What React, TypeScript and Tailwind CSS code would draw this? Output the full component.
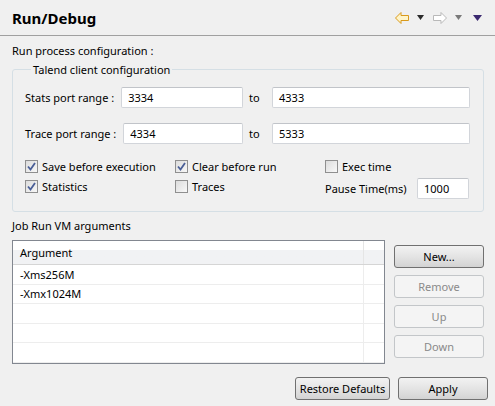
import React from 'react';

const font = 'font-["Noto_Sans","Open_Sans",sans-serif]';

function BackArrow() {
  return (
    <svg width="14" height="12" viewBox="0 0 14 12">
      <path
        d="M0.5 6 L6 0.5 L6 3.5 L13.5 3.5 L13.5 8.5 L6 8.5 L6 11.5 Z"
        fill="#fff4c8"
        stroke="#d99a1c"
        strokeWidth="1"
        strokeLinejoin="round"
      />
    </svg>
  );
}

function ForwardArrow() {
  return (
    <svg width="14" height="12" viewBox="0 0 14 12">
      <path
        d="M13.5 6 L8 0.5 L8 3.5 L0.5 3.5 L0.5 8.5 L8 8.5 L8 11.5 Z"
        fill="#ffffff"
        stroke="#b9b9b9"
        strokeWidth="1"
        strokeLinejoin="round"
      />
    </svg>
  );
}

function Tri({ color, w = 7 }: { color: string; w?: number }) {
  const h = Math.ceil(w / 2) + 1;
  return (
    <svg width={w} height={h} viewBox={`0 0 ${w} ${h}`}>
      <path d={`M0 0 L${w} 0 L${w / 2} ${h} Z`} fill={color} />
    </svg>
  );
}

function Check({ checked, label }: { checked?: boolean; label: string }) {
  return (
    <label className="flex items-center gap-[4px] h-[20px] whitespace-nowrap">
      <span className="w-[13px] h-[13px] border border-[#8f8f8f] bg-white flex items-center justify-center">
        <span className="w-[11px] h-[11px] bg-gradient-to-br from-[#dcdcdc] to-[#f8f8f8] flex items-center justify-center">
          {checked && (
            <svg width="9" height="9" viewBox="0 0 9 9">
              <path d="M1 4.5 L3.5 7.5 L8 1" fill="none" stroke="#4a5f97" strokeWidth="1.8" />
            </svg>
          )}
        </span>
      </span>
      <span>{label}</span>
    </label>
  );
}

function Field({ value, className = '' }: { value: string; className?: string }) {
  return (
    <div
      className={`h-[21px] bg-white border border-[#d2d5da] border-t-[#c1c4c9] rounded-[2px] flex items-center px-[6px] ${className}`}
    >
      {value}
    </div>
  );
}

function Btn({ label, disabled, className = '' }: { label: string; disabled?: boolean; className?: string }) {
  return (
    <button
      className={`h-[23px] rounded-[3px] border flex items-center justify-center whitespace-nowrap ${
        disabled
          ? 'border-[#c3c6c9] bg-[#f4f4f4] text-[#8a8a8a]'
          : 'border-[#707070] bg-gradient-to-b from-[#f2f2f2] via-[#e4e4e4] to-[#d3d3d3] text-black'
      } ${className}`}
    >
      {label}
    </button>
  );
}

export default function App() {
  const rows = ['-Xms256M', '-Xmx1024M', '', '', ''];
  return (
    <div className={`w-[495px] h-[406px] bg-[#f0f0f0] text-[11px] leading-[15px] text-black ${font} overflow-hidden`}>
      {/* Header */}
      <div className="h-[36px] border-b border-[#a0a0a0] flex items-center justify-between pl-[12px] pr-[13px]">
        <h1 className="text-[15px] font-bold pt-[2px]">Run/Debug</h1>
        <div className="flex items-center">
          <BackArrow />
          <span className="ml-[8px]"><Tri color="#2b2b2b" /></span>
          <span className="ml-[9px]"><ForwardArrow /></span>
          <span className="ml-[8px]"><Tri color="#7a7a7a" /></span>
          <span className="ml-[11px]"><Tri color="#3b2970" w={9} /></span>
        </div>
      </div>

      <div className="px-[11px] pt-[7px]">
        <p className="pl-[1px]">Run process configuration :</p>

        <fieldset className="mt-[4px] border border-[#d5dfe5] rounded-[3px] ml-[1px] px-[12px] pb-[15px]">
          <legend className="ml-[6px] px-[2px]">Talend client configuration</legend>

          <div className="flex items-center mt-[10px] mr-[1px]">
            <span className="whitespace-nowrap">Stats port range :</span>
            <Field value="3334" className="flex-1 ml-[7px]" />
            <span className="w-[29px] pl-[6px]">to</span>
            <Field value="4333" className="w-[198px]" />
          </div>

          <div className="flex items-center mt-[15px] mr-[1px]">
            <span className="whitespace-nowrap">Trace port range :</span>
            <Field value="4334" className="flex-1 ml-[7px]" />
            <span className="w-[29px] pl-[6px]">to</span>
            <Field value="5333" className="w-[198px]" />
          </div>

          <div className="grid grid-cols-[150px_150px_1fr] mt-[12px]">
            <Check checked label="Save before execution" />
            <Check checked label="Clear before run" />
            <Check label="Exec time" />
            <Check checked label="Statistics" />
            <Check label="Traces" />
            <div className="flex items-center h-[20px] whitespace-nowrap">
              <span className="mt-[5px]">Pause Time(ms)</span>
              <Field value="1000" className="w-[52px] ml-auto mr-[2px] mt-[5px]" />
            </div>
          </div>
        </fieldset>

        <p className="mt-[6px] pl-[1px]">Job Run VM arguments</p>

        <div className="flex mt-[7px] pl-[1px]">
          <div className="w-[373px] h-[124px] border border-[#828790] bg-white">
            <div className="h-[24px] flex border-b border-[#d5d5d5] bg-gradient-to-b from-white from-40% to-[#f1f2f4] to-40%">
              <div className="w-[351px] pl-[7px] flex items-center border-r border-[#e5e5e5]">Argument</div>
            </div>
            {rows.map((r, i) => (
              <div key={i} className="h-[19.5px] flex border-b border-[#ededed]">
                <div className="w-[351px] pl-[7px] flex items-center border-r border-[#ededed]">{r}</div>
              </div>
            ))}
          </div>

          <div className="ml-[9px] pt-[5px] flex flex-col gap-[7px]">
            <Btn label="New..." className="w-[90px]" />
            <Btn label="Remove" disabled className="w-[90px]" />
            <Btn label="Up" disabled className="w-[90px]" />
            <Btn label="Down" disabled className="w-[90px]" />
          </div>
        </div>

        <div className="flex justify-end gap-[8px] mt-[13px] -mr-[4px]">
          <Btn label="Restore Defaults" className="w-[95px]" />
          <Btn label="Apply" className="w-[90px]" />
        </div>
      </div>
    </div>
  );
}
